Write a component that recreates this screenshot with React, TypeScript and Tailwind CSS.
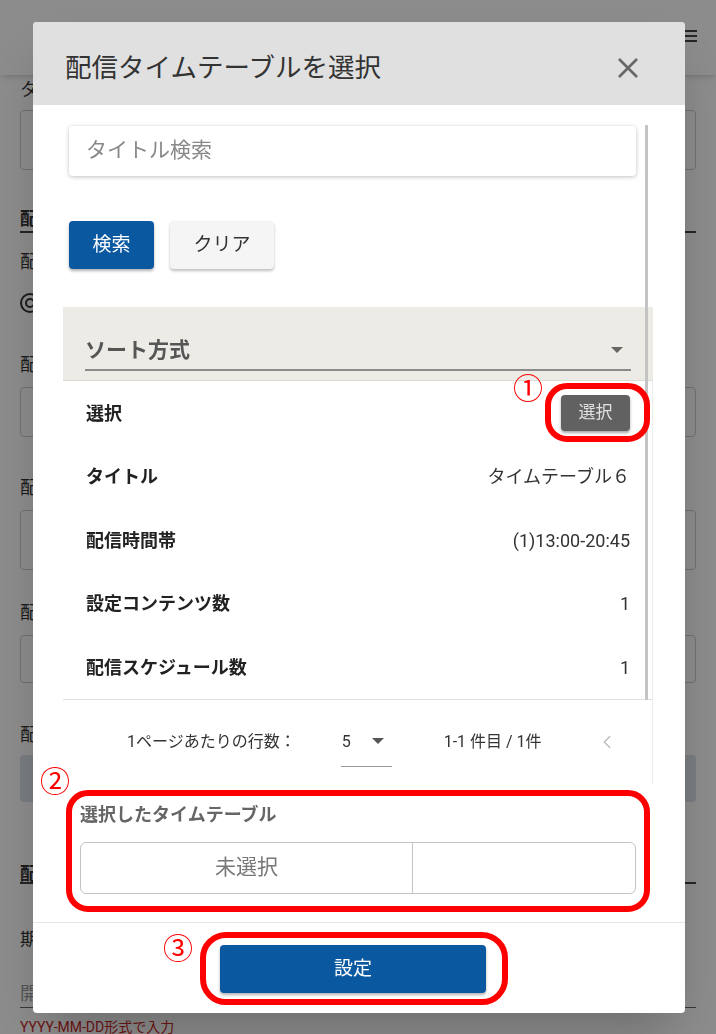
import { ChevronLeft } from 'lucide-react'

const font = { fontFamily: 'Roboto, "Noto Sans CJK JP", sans-serif' }

function Caret({ className = '' }: { className?: string }) {
  return (
    <svg width="12" height="6" viewBox="0 0 12 6" className={className}>
      <path d="M0 0h12L6 6z" fill="currentColor" />
    </svg>
  )
}

function Label({ text, className = '' }: { text: string; className?: string }) {
  return <div className={`text-[18px] leading-[20px] text-[#333] ${className}`}>{text}</div>
}

function BackgroundPage() {
  return (
    <div className="min-h-[1034px] bg-white">
      <header className="relative h-[75px] bg-white shadow-md flex items-start justify-center pt-[12px]">
        <div className="text-[34px] font-bold text-[#1b4f8a] tracking-wide">PreKlass</div>
        <div className="absolute right-[19px] top-[30px] flex flex-col gap-[3px]">
          <span className="block w-[12px] h-[2px] bg-[#444]" />
          <span className="block w-[12px] h-[2px] bg-[#444]" />
          <span className="block w-[12px] h-[2px] bg-[#444]" />
        </div>
      </header>
      <div className="px-5">
        <Label text="タイトル" className="mt-[5px]" />
        <div className="mt-[10px] h-[60px] rounded border border-[#ccc]" />
        <div className="mt-[35px] h-[28px] border-b-2 border-[#444] text-[18px] font-bold text-[#333]">配信設定</div>
        <Label text="配信方法" className="mt-[19px]" />
        <div className="mt-[20px] h-[22px] flex items-center gap-2">
          <span className="w-[20px] h-[20px] rounded-full border-2 border-[#333] flex items-center justify-center">
            <span className="w-[10px] h-[10px] rounded-full border-2 border-[#333]" />
          </span>
          <span className="text-[16px] text-[#333]">通常</span>
        </div>
        <Label text="配信タイムテーブル" className="mt-[41px]" />
        <div className="mt-[12px] h-[50px] rounded border border-[#ccc]" />
        <Label text="配信期間" className="mt-[41px]" />
        <div className="mt-[12px] h-[60px] rounded border border-[#ccc]" />
        <Label text="配信先" className="mt-[33px]" />
        <div className="mt-[12px] h-[48px] rounded border border-[#ccc]" />
        <Label text="配信端末" className="mt-[42px]" />
        <div className="mt-[10px] h-[47px] rounded bg-[#dde3ea]" />
        <div className="mt-[58px] h-[24px] border-b-2 border-[#444] text-[18px] font-bold text-[#333]">配信期間</div>
        <Label text="期間" className="mt-[46px]" />
        <div className="mt-[30px] h-[28px] border-b border-[#666] text-[18px] text-[#999]">開始日</div>
        <div className="mt-[10px] text-[14px] leading-[18px] text-[#c62828]">YYYY-MM-DD形式で入力</div>
      </div>
    </div>
  )
}

const rows = [
  { label: 'タイトル', value: 'タイムテーブル６' },
  { label: '配信時間帯', value: '(1)13:00-20:45' },
  { label: '設定コンテンツ数', value: '1' },
  { label: '配信スケジュール数', value: '1' },
]

function RedBox({ className }: { className: string }) {
  return <div className={`absolute border-[6px] border-[#ff0000] rounded-[22px] pointer-events-none ${className}`} />
}

function Num({ text, className }: { text: string; className: string }) {
  return (
    <div className={`absolute text-[30px] leading-[30px] text-[#ff0000] pointer-events-none ${className}`}>{text}</div>
  )
}

function Dialog() {
  return (
    <div className="relative w-[652px] h-[991px] bg-white rounded shadow-2xl flex flex-col overflow-hidden">
      <div className="h-[83px] shrink-0 bg-[#e0e0e0] flex items-center justify-between pl-8 pr-[46px]">
        <h2 className="text-[26.5px] leading-[32px] text-[#333] pt-[8px]">配信タイムテーブルを選択</h2>
        <svg width="22" height="22" viewBox="0 0 22 22" className="mt-[8px]">
          <path d="M2 2 20 20M20 2 2 20" stroke="#666" strokeWidth="2.6" />
        </svg>
      </div>

      <div className="flex-1 pl-[30px] pr-[32px]">
        <div className="mt-[21px] ml-[6px] mr-[17px] h-[50px] rounded bg-white shadow-[0_1px_4px_rgba(0,0,0,0.25)] flex items-center px-[17px] text-[21px] text-[#888]">
          タイトル検索
        </div>
        <div className="mt-[45px] ml-[6px] flex gap-4">
          <button className="w-[85px] h-[48px] rounded bg-[#0a58a0] text-white text-[19px] shadow-[0_2px_3px_rgba(0,0,0,0.3)]">
            検索
          </button>
          <button className="w-[104px] h-[48px] rounded bg-[#f5f5f5] text-[#333] text-[19px] shadow-[0_2px_3px_rgba(0,0,0,0.25)]">
            クリア
          </button>
        </div>

        <div className="mt-[38px] h-[74px] bg-[#ecebe6] border-b border-[#dedcd6] px-[22px] pt-[27px]">
          <div className="flex items-center justify-between border-b-2 border-[#8a8a8a] h-[37px] pb-[4px]">
            <span className="text-[21px] leading-[26px] font-bold text-[#555]">ソート方式</span>
            <Caret className="text-[#666] mr-[8px]" />
          </div>
        </div>

        <div className="border-r border-[#ececec]">
          <div className="border-b border-[#e0e0e0]">
            <div className="h-[64px] flex items-center justify-between pl-[23px] pr-[22px]">
              <span className="text-[18px] font-bold text-[#222]">選択</span>
              <button className="w-[69px] h-[36px] rounded bg-[#616161] text-[#e0e0e0] text-[17px] shadow-[0_2px_3px_rgba(0,0,0,0.35)]">
                選択
              </button>
            </div>
            {rows.map((r) => (
              <div key={r.label} className="h-[63.5px] flex items-center justify-between pl-[23px] pr-[22px]">
                <span className="text-[18px] font-bold text-[#222]">{r.label}</span>
                <span className="text-[18px] text-[#333]">{r.value}</span>
              </div>
            ))}
          </div>
          <div className="h-[84px] flex items-center text-[16px] text-[#333]">
            <span className="ml-[64px]">1ページあたりの行数：</span>
            <div className="ml-[45px] w-[51px] h-[42px] mt-[8px] border-b border-[#999] flex items-start justify-between pl-[1px] pr-[8px] pt-[5px]">
              <span>5</span>
              <Caret className="text-[#555] mt-[8px]" />
            </div>
            <span className="ml-[52px]">1-1 件目 / 1件</span>
            <ChevronLeft size={22} strokeWidth={1.5} className="ml-[54px] text-[#bbb]" />
          </div>
        </div>

        <div className="pl-[17px] pr-[17px]">
          <div className="mt-[19px] text-[18px] leading-[24px] font-bold text-[#666]">選択したタイムテーブル</div>
          <div className="mt-[15px] h-[52px] rounded-[6px] border border-[#c4c4c4] flex">
            <div className="w-[332px] border-r border-[#c4c4c4] flex items-center justify-center text-[21px] text-[#777]">
              未選択
            </div>
            <div className="flex-1" />
          </div>
        </div>
      </div>

      <div className="h-[91px] shrink-0 border-t border-[#e6e6e6] pt-[22px] pl-[187px]">
        <button className="w-[266px] h-[48px] rounded bg-[#0a58a0] text-white text-[19px] shadow-[0_2px_3px_rgba(0,0,0,0.3)]">
          設定
        </button>
      </div>

      {/* scrollbar */}
      <div className="absolute left-[612px] top-[103px] w-[3px] h-[575px] bg-[#c4c4c4]" />

      {/* annotations */}
      <Num text="①" className="left-[480px] top-[352px]" />
      <RedBox className="left-[512px] top-[361px] w-[105px] h-[59px]" />
      <Num text="②" className="left-[7px] top-[745px]" />
      <RedBox className="left-[33px] top-[768px] w-[584px] h-[122px]" />
      <Num text="③" className="left-[130px] top-[912px]" />
      <RedBox className="left-[167px] top-[910px] w-[308px] h-[73px] rounded-[26px]" />
    </div>
  )
}

export default function App() {
  return (
    <div style={font} className="relative w-[716px] h-[1034px] overflow-hidden">
      <BackgroundPage />
      <div className="fixed inset-0 bg-black/45 flex items-start pl-[33px] pt-[22px]">
        <Dialog />
      </div>
    </div>
  )
}
